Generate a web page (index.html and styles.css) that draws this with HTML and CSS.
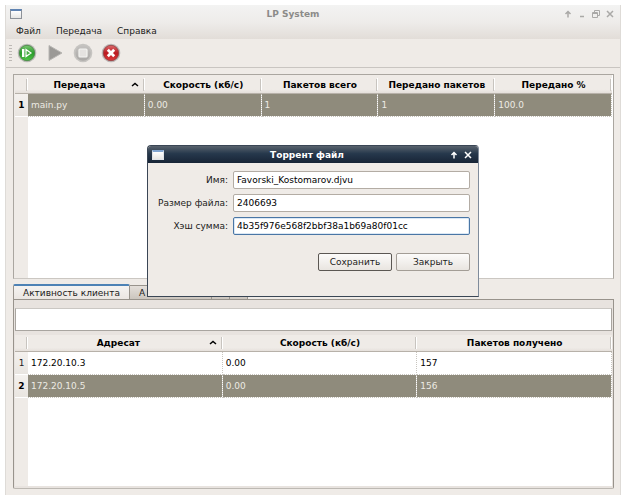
FILE: index.html
```
<!DOCTYPE html>
<html lang="ru">
<head>
<meta charset="utf-8">
<title>LP System</title>
<link rel="stylesheet" href="styles.css">
</head>
<body>
<main class="window">
  <header class="chrome">
    <div class="titlebar">
      <span class="app-icon"></span>
      <h1 class="title">LP System</h1>
      <div class="controls">
        <button type="button" aria-label="Свернуть в заголовок"><svg viewBox="0 0 8 8"><path d="M4 7.500V2M1.500 4 4 1.500 6.500 4"/></svg></button>
        <button type="button" aria-label="Свернуть"><svg viewBox="0 0 8 8"><path d="M2 6.500H6"/></svg></button>
        <button type="button" aria-label="Развернуть"><svg class="thin" viewBox="0 0 8 8"><path d="M2.500 2.500V.5H7.500V5.500H5.500M.5 2.500H5.500V7.500H.5ZM.5 3.500H5.500"/></svg></button>
        <button type="button" aria-label="Закрыть окно"><svg viewBox="0 0 8 8"><path d="M1 1 7 7M7 1 1 7"/></svg></button>
      </div>
    </div>
    <nav class="menu">
      <a href="#file">Файл</a>
      <a href="#transfer">Передача</a>
      <a href="#help">Справка</a>
    </nav>
  </header>

  <div class="toolbar">
    <span class="grip"></span>
    <button type="button" aria-label="Начать">
      <svg viewBox="0 0 20 20">
        <defs>
          <linearGradient id="green" x2="0" y2="1"><stop stop-color="#7cc873"/><stop offset=".5" stop-color="#2a9c2c"/><stop offset="1" stop-color="#4fc546"/></linearGradient>
          <linearGradient id="red" x2="0" y2="1"><stop stop-color="#dc6a6c"/><stop offset=".5" stop-color="#bb1a20"/><stop offset="1" stop-color="#dc3b3c"/></linearGradient>
          <linearGradient id="grey" x2="0" y2="1"><stop stop-color="#c4c2c0"/><stop offset="1" stop-color="#aaa8a6"/></linearGradient>
        </defs>
        <circle cx="10" cy="10" r="9.300" fill="#b9bab5"/><circle cx="10" cy="10" r="7.700" fill="url(#green)" stroke="#3d7d3b" stroke-width=".7"/>
        <path d="M5.600 6.500H6.800V13.500H5.600ZM9 6.500 14 10 9 13.500Z" fill="#4bae47" stroke="#fff" stroke-width="1.200"/>
      </svg>
    </button>
    <button type="button" aria-label="Продолжить" disabled>
      <svg viewBox="0 0 20 20"><path d="M4 2.500 17 10 4 17.500Z" fill="#9b9996" stroke="#b8b6b3"/></svg>
    </button>
    <button type="button" aria-label="Остановить" disabled>
      <svg viewBox="0 0 20 20"><circle cx="10" cy="10" r="9.300" fill="#c6c4c1"/><circle cx="10" cy="10" r="7.700" fill="url(#grey)"/><rect x="6" y="6" width="8" height="8" rx="1" fill="#e4e2e0" stroke="#f4f3f1" stroke-width="1.200"/></svg>
    </button>
    <button type="button" aria-label="Удалить">
      <svg viewBox="0 0 20 20"><circle cx="10" cy="10" r="9.300" fill="#bcb7b6"/><circle cx="10" cy="10" r="7.700" fill="url(#red)" stroke="#8d3536" stroke-width=".7"/><path d="M6.800 6.800 13.200 13.200M13.200 6.800 6.800 13.200" stroke="#fff" stroke-width="2.800"/></svg>
    </button>
  </div>

  <div class="content">
    <section class="frame transfers">
      <table>
        <thead>
          <tr><th class="num"></th><th class="sorted">Передача<svg class="sort" viewBox="0 0 8 5"><path d="M1 4 4 1.500 7 4"/></svg></th><th>Скорость (кб/с)</th><th>Пакетов всего</th><th>Передано пакетов</th><th>Передано %</th></tr>
        </thead>
        <tbody>
          <tr class="selected"><th class="num">1</th><td>main.py</td><td>0.00</td><td>1</td><td>1</td><td>100.0</td></tr>
        </tbody>
      </table>
    </section>

    <section class="tabs">
      <div class="tablist" role="tablist">
        <button type="button" role="tab" class="tab active" aria-selected="true">Активность клиента</button>
        <button type="button" role="tab" class="tab wide" aria-selected="false">А</button>
        <button type="button" class="tab scroll" aria-label="Назад"></button>
        <button type="button" class="tab scroll" aria-label="Вперёд"></button>
      </div>
      <div class="pane">
        <input class="log" type="text" aria-label="Активность" readonly>
        <div class="peers">
          <table>
            <thead>
              <tr><th class="num"></th><th class="sorted">Адресат<svg class="sort" viewBox="0 0 8 5"><path d="M1 4 4 1.500 7 4"/></svg></th><th>Скорость (кб/с)</th><th>Пакетов получено</th></tr>
            </thead>
            <tbody>
              <tr><th class="num">1</th><td>172.20.10.3</td><td>0.00</td><td>157</td></tr>
              <tr class="selected"><th class="num">2</th><td>172.20.10.5</td><td>0.00</td><td>156</td></tr>
            </tbody>
          </table>
        </div>
      </div>
    </section>
  </div>

  <form class="dialog" role="dialog" aria-labelledby="dialog-title">
    <div class="titlebar dark">
      <span class="app-icon"></span>
      <h2 class="title" id="dialog-title">Торрент файл</h2>
      <div class="controls">
        <button type="button" aria-label="Свернуть диалог"><svg viewBox="0 0 8 8"><path d="M4 7.500V2M1.500 4 4 1.500 6.500 4"/></svg></button>
        <button type="button" aria-label="Закрыть диалог"><svg viewBox="0 0 8 8"><path d="M1 1 7 7M7 1 1 7"/></svg></button>
      </div>
    </div>
    <div class="fields">
      <label for="name">Имя:</label><input id="name" type="text" value="Favorski_Kostomarov.djvu">
      <label for="size">Размер файла:</label><input id="size" type="text" value="2406693">
      <label for="hash">Хэш сумма:</label><input id="hash" class="focused" type="text" value="4b35f976e568f2bbf38a1b69a80f01cc">
    </div>
    <div class="actions">
      <button type="submit" class="default">Сохранить</button>
      <button type="button">Закрыть</button>
    </div>
  </form>
</main>
</body>
</html>
```
FILE: styles.css
```
* { box-sizing: border-box; }

body {
  margin: 0;
  padding: 5px 9px 7px 5px;
  min-height: 100vh;
  display: flex;
  background: #fff;
  color: #1c1b1a;
  font: 9px/12px "DejaVu Sans", sans-serif;
}

button, input { font: inherit; color: inherit; }

.window {
  position: relative;
  flex: 1;
  display: flex;
  flex-direction: column;
  background: #efebe7;
  border: 1px solid #dedbd7;
  border-width: 0 1px;
}

.chrome { background: linear-gradient(#f3f3f2, #eeecea 50%, #e2ddd8); }

.titlebar {
  display: flex;
  align-items: center;
  height: 18px;
  padding: 0 6px 0 4px;
  color: #8c8b89;
}
.app-icon {
  width: 12px;
  height: 10px;
  border: 1px solid #8d9299;
  border-top: 2px solid #5f83b2;
  background: linear-gradient(#fff, #e6e6e4);
}
.title {
  flex: 1;
  margin: 0;
  font: bold 9px/12px "DejaVu Sans", sans-serif;
  text-align: center;
}
.controls { display: flex; gap: 6px; }
.controls button {
  width: 8px;
  height: 8px;
  padding: 0;
  border: 0;
  background: none;
  display: flex;
}
.controls svg {
  width: 8px;
  height: 8px;
  fill: none;
  stroke: #aaa9a7;
  stroke-width: 1.5;
}
.controls .thin { stroke-width: 1; }

.menu { display: flex; align-items: flex-end; gap: 15px; height: 16px; padding: 0 0 2px 10px; }
.menu a { color: inherit; text-decoration: none; }

.toolbar {
  display: flex;
  align-items: center;
  gap: 8px;
  height: 29px;
  padding-left: 3px;
  border-bottom: 1px solid #c9c5c1;
}
.toolbar button { width: 20px; height: 20px; padding: 0; border: 0; background: none; }
.toolbar svg { display: block; width: 20px; height: 20px; }
.grip {
  width: 3px;
  height: 17px;
  margin-right: -3px;
  background: repeating-linear-gradient(#bdb9b5 0 1px, transparent 1px 3px);
}

.content { flex: 1; display: flex; flex-direction: column; gap: 5px; padding: 6px 6px 6px 7px; }

.frame, .peers { background: linear-gradient(90deg, #efebe7 13px, #fff 13px); }
.frame {
  flex: 204;
  padding: 0 1px;
  border: 1px solid #aaa6a0;
  border-bottom-color: #cbc7c2;
}
.transfers { background: linear-gradient(90deg, #efebe7 14px, #fff 14px); }

table { width: 100%; table-layout: fixed; border-collapse: separate; border-spacing: 0; }
th, td { padding: 0; height: 23px; }
thead th {
  position: relative;
  height: 19px;
  padding-top: 2px;
  background: linear-gradient(90deg, #fff, #fff) right / 1px 12px no-repeat, linear-gradient(#efebe7 80%, #e5e0db);
  border-bottom: 1px solid #b7b1a9;
  color: #000;
  text-align: center;
}
thead .sorted { padding-right: 14px; }
thead th::after {
  content: "";
  position: absolute;
  top: 4px;
  right: 1px;
  width: 1px;
  height: 12px;
  background: #c8c4bf;
}
.num { width: 13px; text-align: center; }
tbody .num {
  font-weight: normal;
  background: linear-gradient(#f4f1ee, #e9e5e0);
  border-bottom: 1px solid #fff;
}
.selected .num { font-weight: bold; color: #000; }
td {
  padding-left: 3px;
  border-right: 1px dotted #c8c5bf;
  border-bottom: 1px dotted #c8c5bf;
  color: #000;
}
.selected td { background: #8f8b7c; color: #eceae3; background-clip: padding-box; }
.sort {
  position: absolute;
  right: 6px;
  top: 7px;
  width: 8px;
  height: 5px;
  fill: none;
  stroke: #000;
  stroke-width: 1.5;
}

.tabs { flex: 206; display: flex; flex-direction: column; }
.tablist { display: flex; align-items: flex-end; }
.tab {
  height: 14px;
  padding: 0 9px;
  border: 1px solid #98938c;
  border-width: 1px 1px 0 0;
  background: linear-gradient(#e4dfda, #cbc5be);
  line-height: 12px;
}
.tab.active {
  height: 15px;
  border-left-width: 1px;
  border-top: 2px solid #4d82b5;
  border-radius: 2px 2px 0 0;
  background: linear-gradient(#f5f3f1, #ebe6e2);
}
.tab.wide { width: 82px; text-align: left; }
.tab.scroll { width: 18px; padding: 0; }
.pane {
  flex: 1;
  display: flex;
  flex-direction: column;
  gap: 4px;
  padding: 8px 1px 2px;
  border: 1px solid #98938c;
  border-bottom-color: #bdb9b3;
  border-radius: 0 0 2px 2px;
  background: #e8e3df;
}
.log { width: 100%; height: 23px; border: 1px solid #a9a5a0; border-top-color: #cac7c3; background: #fff; }
.peers { flex: 1; }
.peers thead th { height: 17px; padding-top: 0; }
.peers thead th::after { top: 2px; }
.peers .sort { top: 5px; }

/* Torrent dialog floating above the main window */
.dialog {
  position: absolute;
  top: 140px;
  left: 141px;
  width: 332px;
  border: 1px solid #3a4655;
  border-right-color: #7f8b9b;
  border-radius: 4px 4px 0 0;
  background: #efebe7;
}
.dark {
  height: 17px;
  color: #fff;
  background: linear-gradient(#59626d, #26384c 45%, #172436);
  border-radius: 3px 3px 0 0;
}
.dark .app-icon { border-color: #dfe3e8; border-top-color: #81a5d1; }
.dark svg { stroke: #fff; }
.fields {
  display: grid;
  grid-template-columns: 80px 1fr;
  column-gap: 5px;
  row-gap: 5px;
  align-items: center;
  padding: 8px 8px 0 0;
}
.fields label { text-align: right; }
.fields input {
  width: 100%;
  min-width: 0;
  height: 18px;
  padding: 0 3px;
  border: 1px solid #b3aca4;
  border-radius: 2px;
  background: #fff;
  color: #000;
  outline: 0;
}
.fields .focused { border-color: #4a76a5; box-shadow: inset 0 0 0 1px #dbe8f5; }
.actions { display: flex; justify-content: flex-end; gap: 4px; padding: 18px 8px 25px; }
.actions button {
  width: 74px;
  height: 18px;
  padding: 0;
  border: 1px solid #a39d96;
  border-radius: 2px;
  background: linear-gradient(#fcfbfa, #e9e5e0);
}
.actions .default { border-color: #5b5753; }
```
